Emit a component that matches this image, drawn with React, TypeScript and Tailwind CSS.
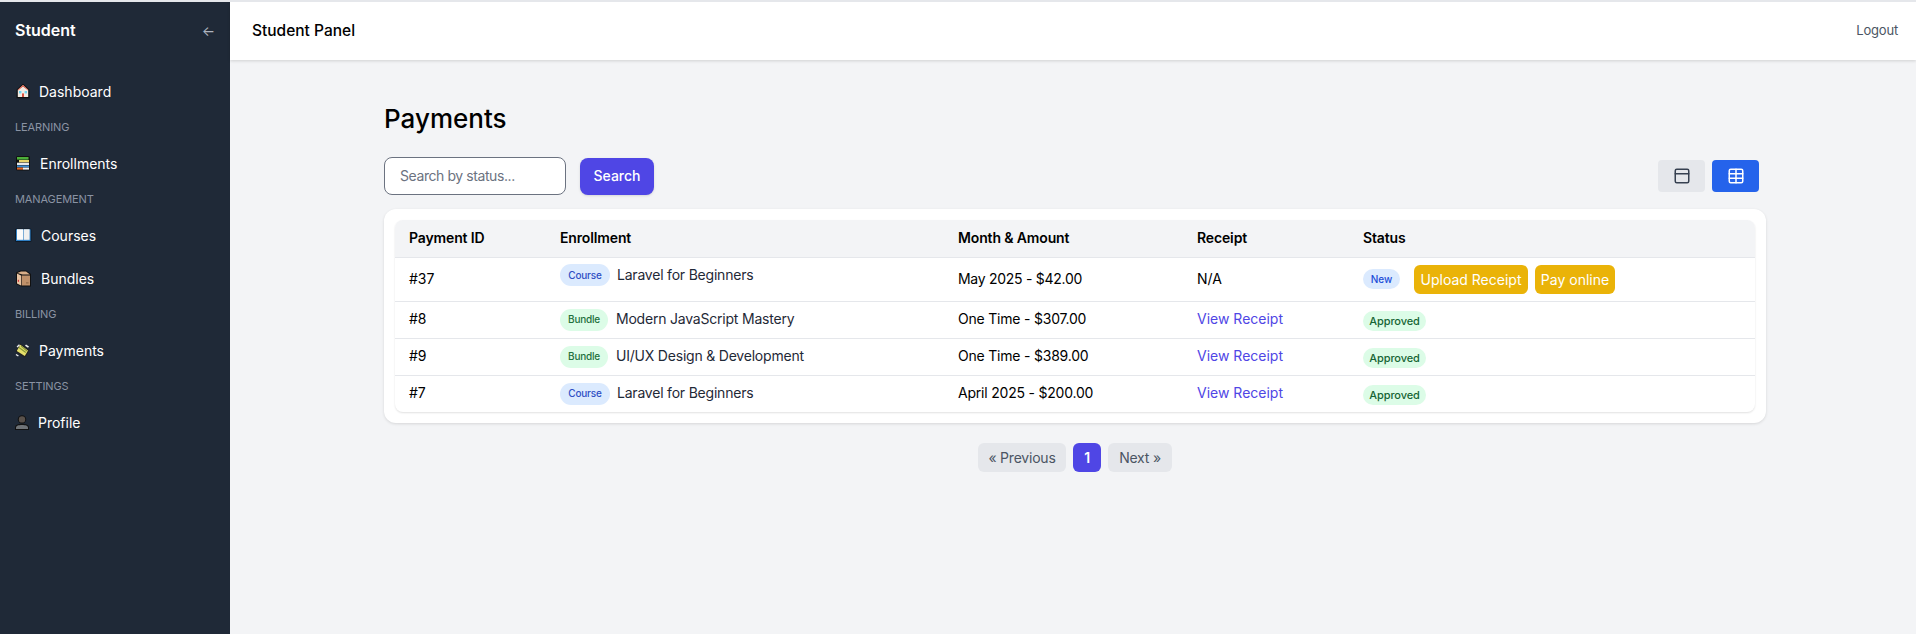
import React from "react";
import { PanelTop, Table } from "lucide-react";

const font = "font-['Inter','Liberation_Sans',sans-serif]";

function HouseIcon() {
  return (
    <svg width="16" height="16" viewBox="0 0 16 16" className="shrink-0">
      <path d="M8 .8 1.6 6.6v8.6h12.8V6.6z" fill="#111" />
      <path d="M8 2 2.8 6.8V14h10.4V6.8z" fill="#f2ece4" />
      <path d="M8 2 3.2 6.4 3 7.4 8 3.4l5 4-.2-1z" fill="#d9523f" />
      <rect x="4" y="8" width="2.4" height="2.4" fill="#6fd3ee" />
      <rect x="9.6" y="8" width="2.4" height="2.4" fill="#6fd3ee" />
      <rect x="7" y="10.4" width="2" height="3.6" fill="#d9523f" />
    </svg>
  );
}
function BooksIcon() {
  return (
    <svg width="16" height="16" viewBox="0 0 16 16" className="shrink-0">
      <rect x="1" y="1" width="14" height="14.4" rx="1.5" fill="#111" />
      <rect x="2" y="2" width="11.5" height="2.6" fill="#4caf3a" />
      <rect x="4" y="5" width="10" height="2.3" fill="#e8d56a" />
      <rect x="2" y="7.7" width="12" height="2.3" fill="#e9e9e9" />
      <rect x="2" y="10.4" width="12" height="2" fill="#3f8fd2" />
      <rect x="2" y="12.6" width="6" height="2" fill="#e8641e" />
      <rect x="8" y="12.6" width="6" height="2" fill="#efefef" />
    </svg>
  );
}
function BookIcon() {
  return (
    <svg width="17" height="14" viewBox="0 0 17 14" className="shrink-0">
      <rect x="0" y="0.5" width="16.5" height="13.5" rx="1.5" fill="#0e1a28" />
      <rect x="1" y="1.4" width="14.6" height="11.6" fill="#2f7fc4" />
      <rect x="2" y="1.2" width="6" height="10.6" fill="#fbfbfb" />
      <rect x="8.6" y="1.2" width="6" height="10.6" fill="#f0f0f0" />
    </svg>
  );
}
function BoxIcon() {
  return (
    <svg width="17" height="17" viewBox="0 0 17 17" className="shrink-0">
      <path d="M1 2.5 5.5.5h5.5l5 3.5v12.5H6L1 14z" fill="#111" />
      <path d="M2 3.4 6 5.5V15.5L2 13.4z" fill="#e7c3a2" />
      <path d="M2.4 3 6 1.4h5L15 4.6H7.5z" fill="#d9ae88" />
      <path d="M6.6 5.5H15v10H6.6z" fill="#c0916a" />
      <rect x="2.8" y="9.8" width="1.2" height="2" fill="#d5323a" />
      <rect x="11" y="12.4" width="2.6" height="1" fill="#8a6443" />
    </svg>
  );
}
function MoneyIcon() {
  return (
    <svg width="15" height="15" viewBox="0 0 15 15" className="shrink-0">
      <path d="M5 .5 14.5 7 11 13.5 9 14.5.5 8.5z" fill="#222" />
      <path d="M5.2 1.8 13 7.4 9.8 13 1.8 8z" fill="#e6e06a" />
      <path d="M4 4.5 10.8 9.6M6 3 12 8" stroke="#8a9a3a" strokeWidth="1.2" />
      <path d="M1.6 3.4 4 1.2l1 1-2.4 2.2zM11 1.6l3 2-1 1.2-3-2zM1.4 11l2.4 1.6-.8 1L.6 12z" fill="#eeeeee" />
    </svg>
  );
}
function PersonIcon() {
  return (
    <svg width="14" height="15" viewBox="0 0 14 15" className="shrink-0">
      <circle cx="7" cy="4.4" r="4.2" fill="#111" />
      <circle cx="7" cy="4.4" r="3.2" fill="#5a524c" />
      <path d="M0 15v-2.4C0 10 3 8.8 7 8.8s7 1.2 7 3.8V15z" fill="#111" />
      <path d="M1 14v-1.4C1 10.8 3.6 10 7 10s6 .8 6 2.6V14z" fill="#6f7377" />
    </svg>
  );
}

function NavItem({ icon, label, gap }: { icon: React.ReactNode; label: string; gap: string }) {
  return (
    <a className={`flex items-center h-[36px] text-[14px] text-white ${gap}`}>
      {icon}
      <span>{label}</span>
    </a>
  );
}
function NavLabel({ children }: { children: string }) {
  return <div className="h-[36px] flex items-center text-[11px] tracking-[-0.01em] text-[#8a93a3] uppercase">{children}</div>;
}

function TypeBadge({ kind }: { kind: "Course" | "Bundle" }) {
  const cls = kind === "Course" ? "bg-[#dbeafe] text-[#2f4fc4] w-[50px]" : "bg-[#dcfce7] text-[#22703c] w-[48px]";
  return (
    <span className={`inline-flex items-center justify-center h-[22px] rounded-full text-[10px] font-medium shrink-0 ${cls}`}>
      {kind}
    </span>
  );
}
function Approved() {
  return (
    <span className="inline-flex items-center justify-center w-[63px] h-[20px] mt-[3px] rounded-full bg-[#dcfce7] text-[#166534] text-[11px] font-medium tracking-[-0.01em]">
      Approved
    </span>
  );
}

const rows = [
  { id: "#8", kind: "Bundle" as const, name: "Modern JavaScript Mastery", nameGap: "gap-[8px]", amount: "One Time - $307.00" },
  { id: "#9", kind: "Bundle" as const, name: "UI/UX Design & Development", nameGap: "gap-[8px]", amount: "One Time - $389.00" },
  { id: "#7", kind: "Course" as const, name: "Laravel for Beginners", nameGap: "gap-[7px]", amount: "April 2025 - $200.00" },
];

const thClass = "pl-[14px] pb-[2px] font-semibold tracking-[-0.01em]";

export default function App() {
  return (
    <div className={`${font} h-[634px] overflow-hidden bg-[#f3f4f6] border-t-2 border-[#e5e7eb] flex text-black`}>
      <aside className="w-[230px] shrink-0 bg-[#1f2937] text-white flex flex-col">
        <div className="h-[57px] pl-[15px] pr-[15px] flex items-center justify-between">
          <span className="text-[16px] font-semibold -mt-[1px]">Student</span>
          <span className="text-[14px] text-[#aeb4bf] -mt-[1px]">←</span>
        </div>
        <nav className="pl-[15px] pt-[14px] flex flex-col">
          <NavItem icon={<HouseIcon />} label="Dashboard" gap="gap-[8px]" />
          <NavLabel>Learning</NavLabel>
          <NavItem icon={<BooksIcon />} label="Enrollments" gap="gap-[9px]" />
          <NavLabel>Management</NavLabel>
          <NavItem icon={<BookIcon />} label="Courses" gap="gap-[9px]" />
          <div className="h-[7px]" />
          <NavItem icon={<BoxIcon />} label="Bundles" gap="gap-[9px]" />
          <NavLabel>Billing</NavLabel>
          <NavItem icon={<MoneyIcon />} label="Payments" gap="gap-[9px]" />
          <NavLabel>Settings</NavLabel>
          <NavItem icon={<PersonIcon />} label="Profile" gap="gap-[9px]" />
        </nav>
      </aside>

      <div className="flex-1 flex flex-col min-w-0">
        <header className="h-[58px] bg-white shadow-[0_1px_3px_rgba(0,0,0,0.15)] flex items-center justify-between pl-[22px] pr-[18px] shrink-0">
          <span className="text-[15.5px] font-medium -mt-[1px]">Student Panel</span>
          <span className="text-[13px] tracking-[-0.015em] text-[#4b5563] -mt-[1px]">Logout</span>
        </header>

        <main className="pl-[154px] pr-[150px] pt-[41px]">
          <h1 className="text-[26px] leading-[36px] font-medium">Payments</h1>

          <div className="mt-[20px] flex items-center justify-between">
            <div className="flex items-center gap-[14px]">
              <input
                readOnly
                placeholder="Search by status..."
                className="w-[182px] h-[38px] px-[15px] pb-[2px] text-[14px] tracking-[-0.03em] bg-white border border-[#6b7280] rounded-lg placeholder:text-[#6b7280] outline-none"
              />
              <button className="w-[74px] h-[37px] pb-[2px] rounded-lg bg-[#4f46e5] text-white text-[14px] font-medium shadow-sm">
                Search
              </button>
            </div>
            <div className="flex items-center gap-[7px] pr-[7px]">
              <button className="w-[47px] h-[32px] rounded bg-[#e5e7eb] flex items-center justify-center text-[#374151]">
                <PanelTop size={18} />
              </button>
              <button className="w-[47px] h-[32px] rounded bg-[#2563eb] flex items-center justify-center text-white">
                <Table size={18} />
              </button>
            </div>
          </div>

          <div className="mt-[14px] bg-white rounded-xl shadow-[0_1px_3px_rgba(0,0,0,0.12)] p-[11px]">
            <div className="rounded-lg shadow-[0_1px_2px_rgba(0,0,0,0.12)] overflow-hidden">
              <table className="w-full table-fixed border-collapse text-[14px] text-left">
                <colgroup>
                  <col className="w-[151px]" />
                  <col className="w-[398px]" />
                  <col className="w-[239px]" />
                  <col className="w-[166px]" />
                  <col />
                </colgroup>
                <thead className="bg-[#f3f4f6]">
                  <tr className="h-[37px] border-b border-[#e5e7eb]">
                    <th className={thClass}>Payment ID</th>
                    <th className={thClass}>Enrollment</th>
                    <th className={thClass}>Month &amp; Amount</th>
                    <th className={thClass}>Receipt</th>
                    <th className={thClass}>Status</th>
                  </tr>
                </thead>
                <tbody>
                  <tr className="h-[44px] border-b border-[#e5e7eb]">
                    <td className="pl-[14px] pb-[2px]">#37</td>
                    <td className="pl-[14px]">
                      <div className="flex items-center gap-[7px] -mt-[8px] text-[#1f2937] tracking-[-0.015em]">
                        <TypeBadge kind="Course" />
                        <span className="-mt-[1px]">Laravel for Beginners</span>
                      </div>
                    </td>
                    <td className="pl-[14px] pb-[2px] tracking-[-0.02em]">May 2025 - $42.00</td>
                    <td className="pl-[14px] pb-[2px]">N/A</td>
                    <td className="pl-[14px]">
                      <div className="flex items-center">
                        <span className="inline-flex items-center justify-center w-[37px] h-[20px] rounded-full bg-[#dbeafe] text-[#1d4ed8] text-[10px] font-medium">
                          New
                        </span>
                        <button className="ml-[14px] w-[114px] h-[29px] rounded-md bg-[#eab308] text-white text-[14px]">Upload Receipt</button>
                        <button className="ml-[7px] w-[80px] h-[29px] rounded-md bg-[#eab308] text-white text-[14px]">Pay online</button>
                      </div>
                    </td>
                  </tr>
                  {rows.map((r, i) => (
                    <tr key={r.id} className={`h-[37px] ${i < 2 ? "border-b border-[#e5e7eb]" : ""}`}>
                      <td className="pl-[14px] pb-[2px]">{r.id}</td>
                      <td className="pl-[14px]">
                        <div className={`flex items-center text-[#1f2937] tracking-[-0.015em] ${r.nameGap}`}>
                          <TypeBadge kind={r.kind} />
                          <span className="-mt-[2px]">{r.name}</span>
                        </div>
                      </td>
                      <td className="pl-[14px] pb-[2px] tracking-[-0.015em]">{r.amount}</td>
                      <td className="pl-[14px] pb-[2px] text-[#4f46e5]">View Receipt</td>
                      <td className="pl-[14px]"><Approved /></td>
                    </tr>
                  ))}
                </tbody>
              </table>
            </div>
          </div>

          <div className="mt-[20px] flex items-center justify-center gap-[7px] text-[14px] tracking-[-0.015em]">
            <span className="w-[88px] h-[29px] rounded-md bg-[#e5e7eb] text-[#4b5563] flex items-center justify-center">« Previous</span>
            <span className="w-[28px] h-[29px] rounded-md bg-[#4f46e5] text-white font-semibold flex items-center justify-center">1</span>
            <span className="w-[64px] h-[29px] rounded-md bg-[#e5e7eb] text-[#4b5563] flex items-center justify-center">Next »</span>
          </div>
        </main>
      </div>
    </div>
  );
}
